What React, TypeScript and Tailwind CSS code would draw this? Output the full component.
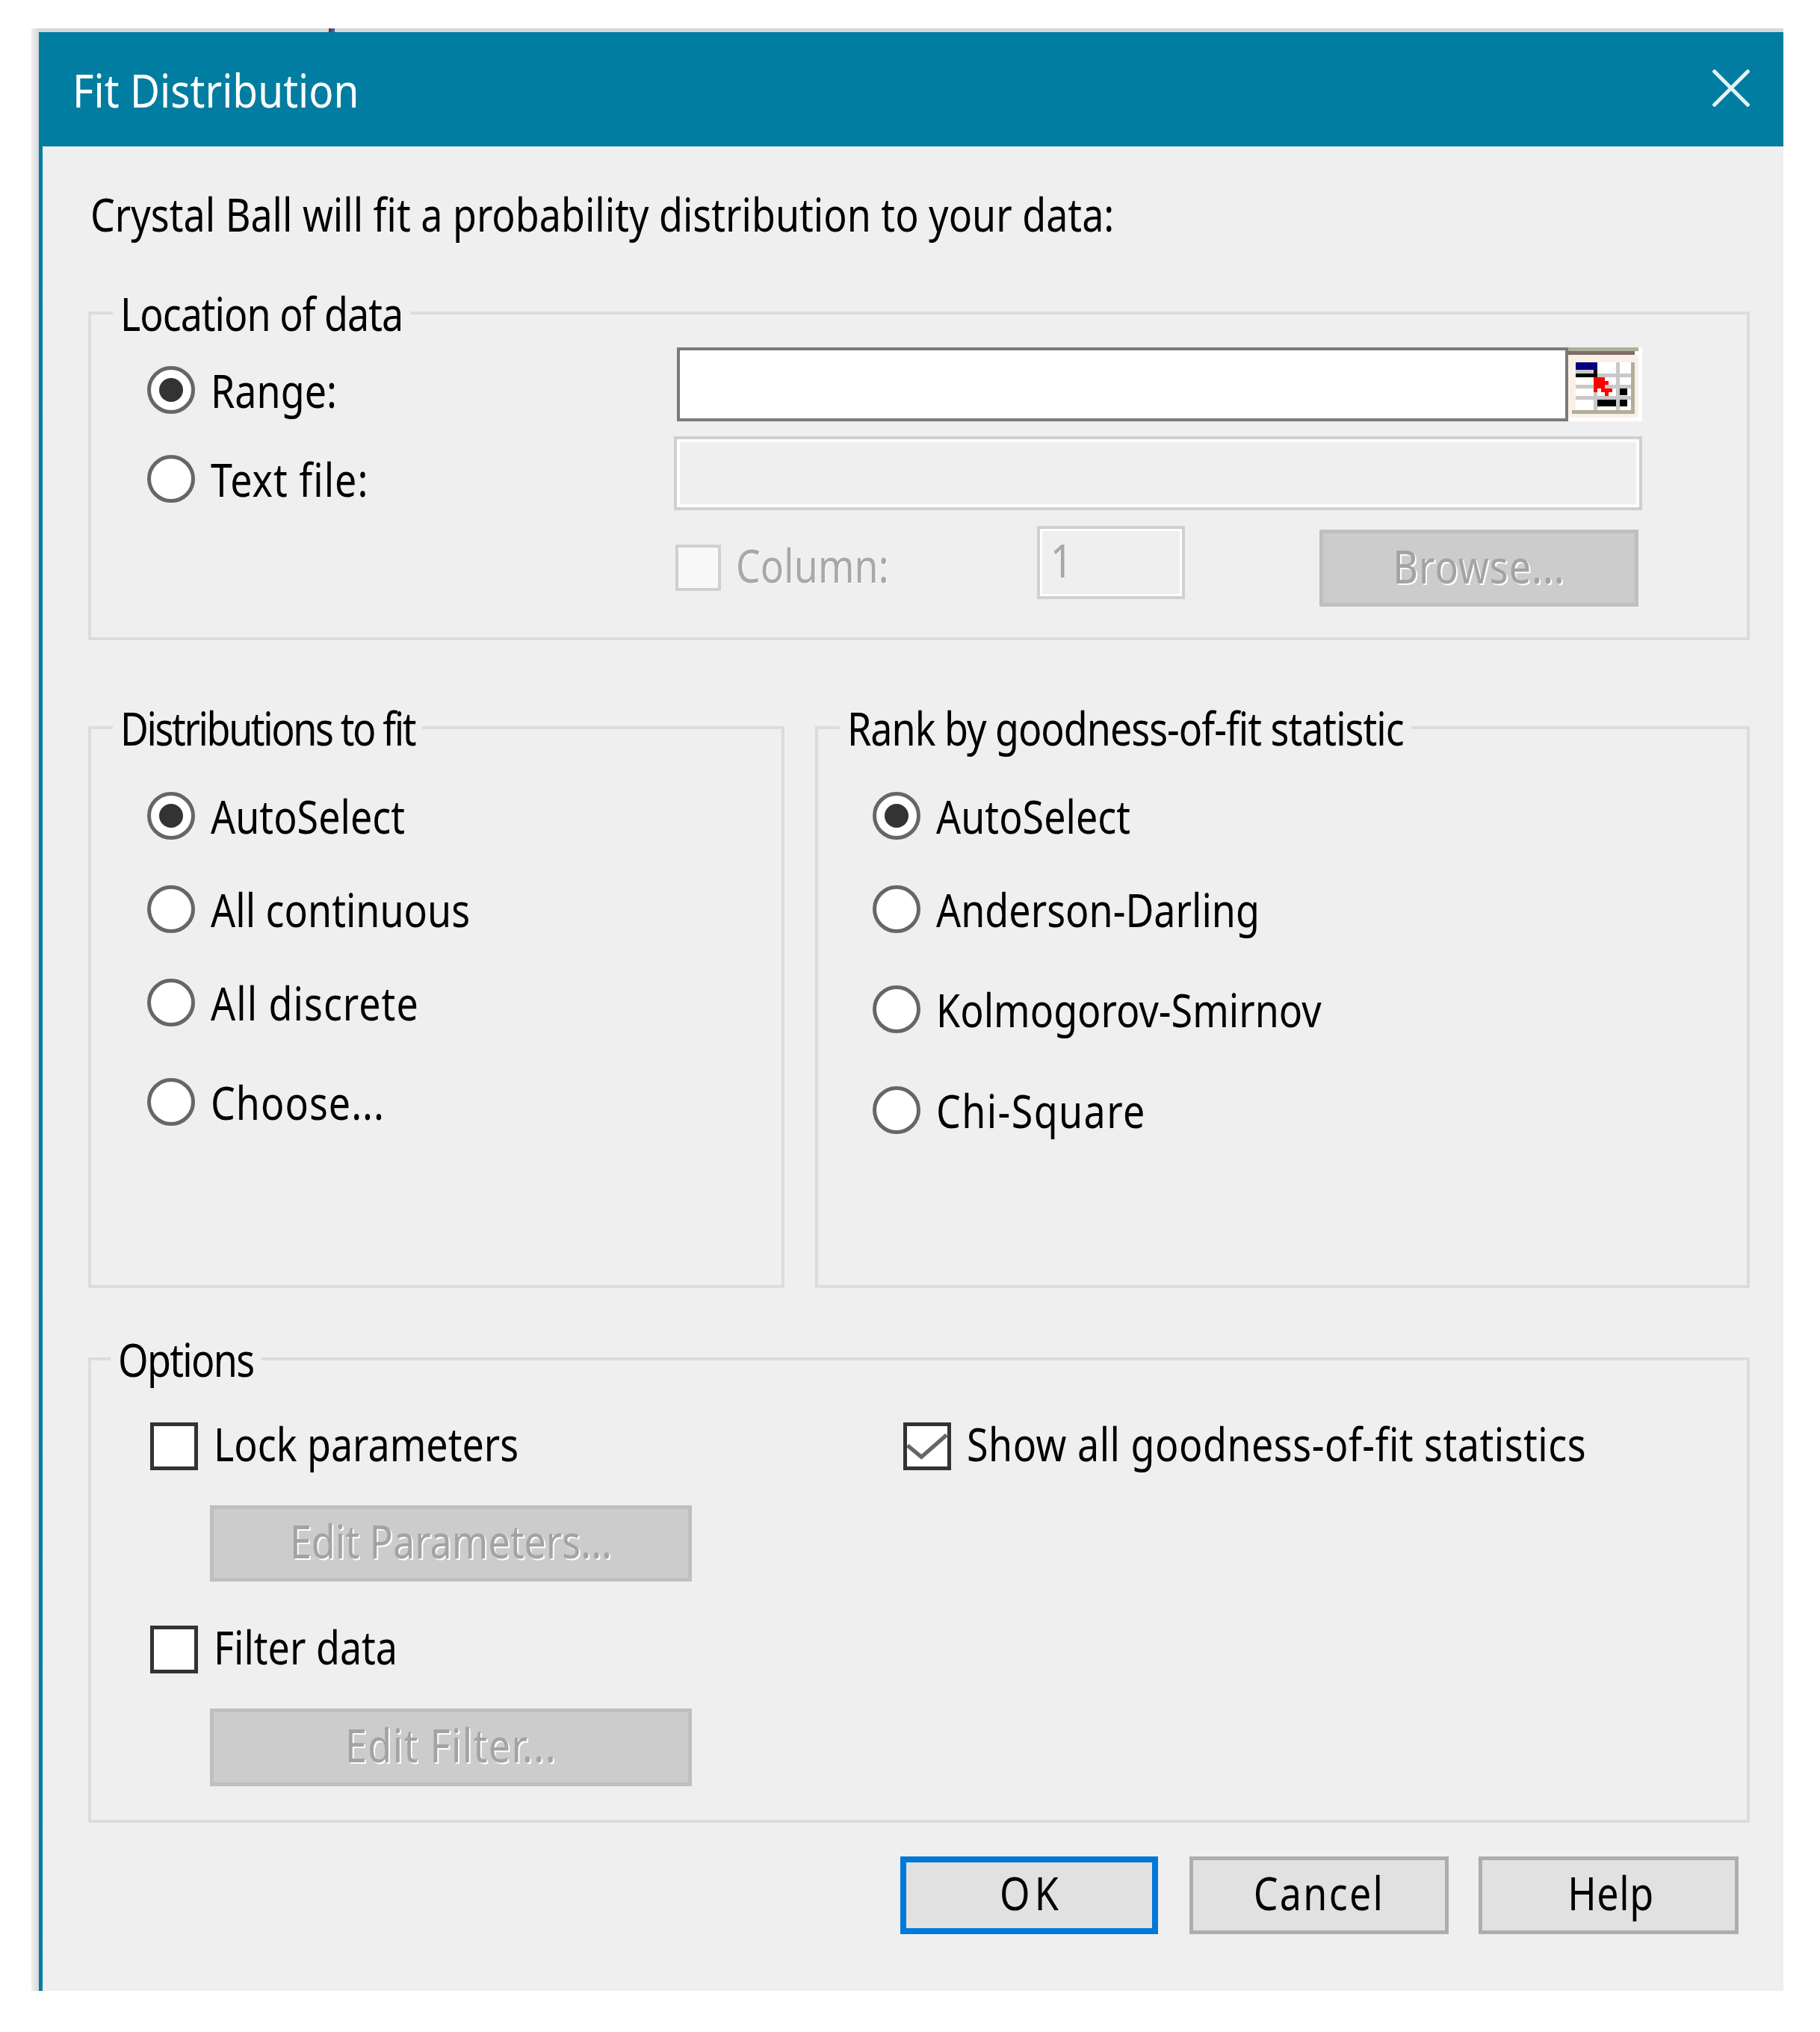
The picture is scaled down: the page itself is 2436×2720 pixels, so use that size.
import React from 'react';

const T: React.FC<{ children: React.ReactNode; className?: string }> = ({ children, className = '-translate-y-[4px]' }) => (
    <span className={`inline-block origin-center scale-y-[1.2] whitespace-nowrap ${className}`}>{children}</span>
);

const Radio: React.FC<{ label: string; checked?: boolean; className?: string; textClass?: string }> = ({
    label,
    checked,
    className = '',
    textClass = 'translate-y-0',
}) => (
    <div className={`flex h-[64px] items-center gap-[21px] ${className}`}>
        <div className="flex h-[64px] w-[64px] shrink-0 items-center justify-center rounded-full border-[5px] border-[#666666] bg-white">
            {checked && <div className="h-[32px] w-[32px] rounded-full bg-[#333333]" />}
        </div>
        <T className={textClass}>{label}</T>
    </div>
);

const Checkbox: React.FC<{ label: string; checked?: boolean; className?: string; textClass?: string }> = ({
    label,
    checked,
    className = '',
    textClass = '-translate-y-[4px]',
}) => (
    <div className={`flex h-[64px] items-center gap-[21px] ${className}`}>
        <div className="h-[64px] w-[64px] shrink-0 border-[5px] border-[#333333] bg-white">
            {checked && (
                <svg viewBox="163 150 165 163" className="block h-full w-full">
                    <polyline points="165,228 222,275 325,185" fill="none" stroke="#666666" strokeWidth="16" />
                </svg>
            )}
        </div>
        <T className={textClass}>{label}</T>
    </div>
);

const Group: React.FC<{ title: string; className: string; legendClass?: string; titleClass?: string; children: React.ReactNode }> = ({
    title,
    className,
    legendClass = 'ml-[29px]',
    titleClass,
    children,
}) => (
    <fieldset className={`border-[4px] border-[#dcdcdc] ${className}`}>
        <legend className={`h-[60px] px-[10px] leading-[60px] ${legendClass}`}>
            <T className={titleClass}>{title}</T>
        </legend>
        {children}
    </fieldset>
);

const DisabledButton: React.FC<{ label: string; className: string; textClass?: string }> = ({ label, className, textClass }) => (
    <div className={`flex items-center justify-center border-[5px] border-[#bfbfbf] bg-[#cccccc] text-[#a3a3a3] [text-shadow:2px_2px_0_#ffffff] ${className}`}>
        <T className={textClass}>{label}</T>
    </div>
);

const RangeIcon = () => (
    <svg viewBox="117 75 298 297" className="block h-[99px] w-[99px] shrink-0" shapeRendering="crispEdges">
        <rect x="117" y="75" width="298" height="297" fill="#ffffff" />
        <rect x="117" y="105" width="283" height="253" fill="#fbf0e8" />
        <rect x="117" y="75" width="283" height="15" fill="#b0ae9c" />
        <rect x="117" y="90" width="268" height="15" fill="#7d6f68" />
        <rect x="147" y="135" width="223" height="193" fill="#ffffff" />
        <rect x="370" y="135" width="15" height="208" fill="#b0ae9c" />
        <rect x="132" y="328" width="253" height="15" fill="#b0ae9c" />
        <rect x="220" y="135" width="15" height="193" fill="#c8c8c8" />
        <rect x="310" y="135" width="15" height="193" fill="#c8c8c8" />
        <rect x="147" y="180" width="223" height="15" fill="#c8c8c8" />
        <rect x="147" y="225" width="223" height="15" fill="#c8c8c8" />
        <rect x="147" y="270" width="223" height="15" fill="#c8c8c8" />
        <rect x="147" y="135" width="88" height="30" fill="#000080" />
        <rect x="147" y="165" width="73" height="15" fill="#c8c8c8" />
        <rect x="147" y="180" width="88" height="15" fill="#000000" />
        <rect x="220" y="165" width="15" height="30" fill="#000000" />
        <path d="M220 195H265V210H280V225H265V240H295V255H280V270H265V255H250V240H235V255H220Z" fill="#ff0000" />
        <rect x="325" y="240" width="30" height="28" fill="#000000" />
        <rect x="325" y="285" width="30" height="28" fill="#000000" />
        <rect x="235" y="285" width="75" height="28" fill="#000000" />
    </svg>
);

export default function App() {
    return (
        <div className="h-[2720px] w-[2436px] bg-white pl-[42px] pt-[38px] font-['Noto_Sans',sans-serif] text-[52px] leading-[60px] text-black">
            <div className="relative w-[2345px] bg-gradient-to-r from-[#f0f0f0] to-[#d8d8d8] to-[10px] pl-[10px] pt-[5px]">
                <div className="absolute left-[398px] top-0 h-[5px] w-[8px] bg-gradient-to-r from-[#7a1010] to-[#0070b0]" />
                <div className="flex h-[153px] items-center justify-between bg-[#007da0] pl-[45px] pr-[45px] text-[55px] text-white">
                    <T className="translate-y-0 scale-y-[1.14]">Fit Distribution</T>
                    <svg viewBox="0 0 50 50" className="h-[50px] w-[50px] -translate-y-[2px]">
                        <path d="M1 1L49 49M49 1L1 49" fill="none" stroke="#e6f3f6" strokeWidth="5" />
                    </svg>
                </div>
                <div className="h-[2469px] border-l-[5px] border-[#007da0] bg-[#efefef] pl-[61px]">
                    <div className="mb-[73px] ml-[3px] pt-[60px]">
                        <T className="translate-y-0">Crystal Ball will fit a probability distribution to your data:</T>
                    </div>

                    <Group title="Location of data" className="h-[468px] w-[2224px]" titleClass="translate-y-0 tracking-[-1px]">
                        <div className="pl-[75px] pt-[16px]">
                            <div className="flex h-[99px]">
                                <Radio label="Range:" checked className="mt-[25px] w-[709px]" />
                                <div className="h-[99px] w-[1193px] border-[4px] border-[#7a7a7a] bg-white" />
                                <RangeIcon />
                            </div>
                            <div className="mt-[20px] flex h-[99px]">
                                <Radio label="Text file:" textClass="tracking-[1px]" className="mt-[25px] w-[705px]" />
                                <div className="h-[99px] w-[1296px] border-[4px] border-[#cfcfcf] bg-[#efefef] shadow-[inset_0_0_0_4px_#ffffff]" />
                            </div>
                            <div className="mt-[21px] flex items-start pl-[707px] text-[#a8a8a8]">
                                <div className="mt-[25px] h-[62px] w-[61px] shrink-0 border-[4px] border-[#d0d0d0] bg-[#f8f8f8]" />
                                <div className="ml-[20px] mt-[26px] w-[403px] [text-shadow:1px_1px_0_#ffffff]">
                                    <T>Column:</T>
                                </div>
                                <div className="h-[98px] w-[198px] border-[4px] border-[#d0d0d0] pl-[14px] leading-[78px] shadow-[inset_0_0_0_3px_#ffffff]">
                                    <T className="translate-y-[2px]">1</T>
                                </div>
                                <DisabledButton label="Browse..." textClass="-translate-y-[4px] tracking-[1px]" className="ml-[180px] mt-[5px] h-[103px] w-[427px]" />
                            </div>
                        </div>
                    </Group>

                    <div className="mt-[87px] flex gap-[41px]">
                        <Group title="Distributions to fit" className="h-[780px] w-[932px]" titleClass="translate-y-0 tracking-[-2.4px]">
                            <div className="pl-[75px] pt-[56px]">
                                <Radio label="AutoSelect" checked />
                                <Radio label="All continuous" className="mt-[61px]" />
                                <Radio label="All discrete" textClass="tracking-[1px]" className="mt-[61px]" />
                                <Radio label="Choose..." textClass="tracking-[1px]" className="mt-[69px]" />
                            </div>
                        </Group>
                        <Group title="Rank by goodness-of-fit statistic" className="h-[780px] w-[1251px]" titleClass="translate-y-0 tracking-[-1px]">
                            <div className="pl-[73px] pt-[56px]">
                                <Radio label="AutoSelect" checked />
                                <Radio label="Anderson-Darling" className="mt-[61px]" />
                                <Radio label="Kolmogorov-Smirnov" className="mt-[70px]" />
                                <Radio label="Chi-Square" textClass="tracking-[1.4px]" className="mt-[71px]" />
                            </div>
                        </Group>
                    </div>

                    <Group title="Options" className="mt-[65px] h-[651px] w-[2224px]" legendClass="ml-[26px]" titleClass="translate-y-0 tracking-[-1.7px]">
                        <div className="flex pl-[79px] pt-[55px]">
                            <div className="w-[1008px]">
                                <Checkbox label="Lock parameters" />
                                <DisabledButton label="Edit Parameters..." className="ml-[80px] mt-[47px] h-[102px] w-[645px]" />
                                <Checkbox label="Filter data" className="mt-[59px]" />
                                <DisabledButton label="Edit Filter..." textClass="-translate-y-[4px] tracking-[1.4px]" className="ml-[80px] mt-[47px] h-[104px] w-[645px]" />
                            </div>
                            <Checkbox label="Show all goodness-of-fit statistics" checked textClass="-translate-y-[4px] tracking-[0.5px]" />
                        </div>
                    </Group>

                    <div className="mt-[45px] flex w-[2209px] justify-end">
                        <div className="flex h-[104px] w-[345px] items-center justify-center border-[8px] border-[#0078d7] bg-[#e1e1e1]">
                            <T className="-translate-y-[4px] translate-x-[3px] tracking-[6px]">OK</T>
                        </div>
                        <div className="ml-[42px] flex h-[104px] w-[347px] items-center justify-center border-[5px] border-[#adadad] bg-[#e1e1e1]">
                            <T className="-translate-y-[4px] tracking-[2.3px]">Cancel</T>
                        </div>
                        <div className="ml-[40px] flex h-[104px] w-[348px] items-center justify-center border-[5px] border-[#adadad] bg-[#e1e1e1]">
                            <T className="-translate-y-[4px] translate-x-[3px] tracking-[0.6px]">Help</T>
                        </div>
                    </div>
                </div>
            </div>
        </div>
    );
}
